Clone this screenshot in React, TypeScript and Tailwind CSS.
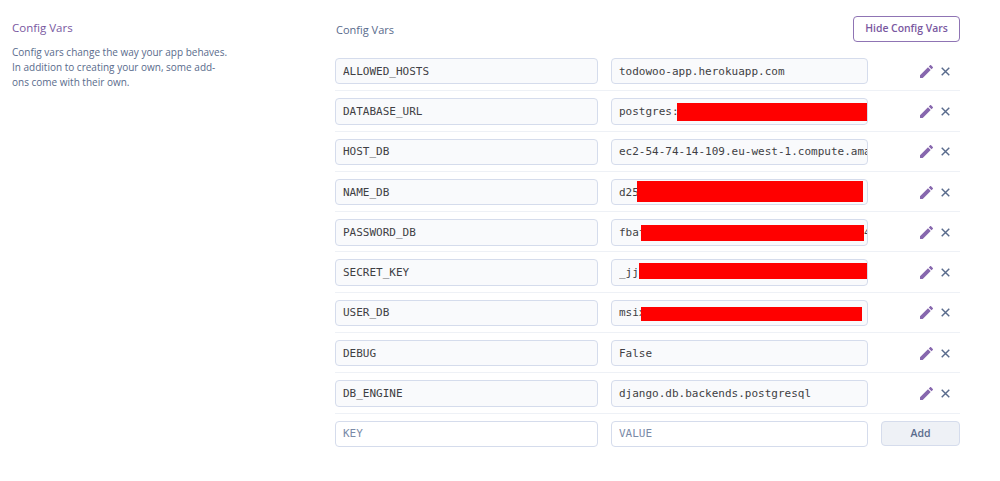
const vars = [
  { k: "ALLOWED_HOSTS", v: "todowoo-app.herokuapp.com" },
  { k: "DATABASE_URL", v: "postgres://kjdhsfkjhsdkjfhsdkjfhskjdfhskjdfhskjdfhskjdfh", red: "left-[66px] top-[4.5px] w-[190px] h-[18px]" },
  { k: "HOST_DB", v: "ec2-54-74-14-109.eu-west-1.compute.amazonaws.com" },
  { k: "NAME_DB", v: "d25kjhsdfkjhsdkfjhsdkfjh", red: "left-[26px] top-[2px] w-[226px] h-[21px]" },
  { k: "PASSWORD_DB", v: "fbafkjhsdfkjhsdkfjhsdkfjhsdkfjhsdkfjh4cdef", red: "left-[30px] top-[6px] w-[223px] h-[16px]" },
  { k: "SECRET_KEY", v: "_jjkjhsdfkjhsdkfjhsdkfjhsdkfjhsdkfjhsdfkj", red: "left-[28px] top-[4px] w-[228px] h-[16px]" },
  { k: "USER_DB", v: "msixkjhsdfkjhsdkfjhsd", red: "left-[30px] top-[7px] w-[221px] h-[14px]" },
  { k: "DEBUG", v: "False" },
  { k: "DB_ENGINE", v: "django.db.backends.postgresql" },
];

function Pencil() {
  return (
    <svg viewBox="3 3 18 18" className="h-[13px] w-[13px] fill-[#8767ae]">
      <path d="M3 17.25V21h3.75L17.81 9.94l-3.75-3.75L3 17.25zM20.71 7.04c.39-.39.39-1.02 0-1.41l-2.34-2.34c-.39-.39-1.02-.39-1.41 0l-1.83 1.83 3.75 3.75 1.83-1.83z" />
    </svg>
  );
}

function Cross() {
  return (
    <svg viewBox="0 0 10 10" className="h-[9px] w-[9px] fill-none stroke-[#596b8c] stroke-[1.6]">
      <path d="M0.8 0.8 9.2 9.2M9.2 0.8 0.8 9.2" />
    </svg>
  );
}

const field =
  "block h-[26.4px] rounded-[4px] border border-[#d5dcec] pl-[7px] font-['DejaVu_Sans_Mono',monospace] text-[11px] text-[#3f3f44] outline-none";

export default function App() {
  return (
    <div className="flex h-[481px] w-[1000px] bg-white pt-4 font-['Open_Sans',sans-serif]">
      <div className="w-[335px] pl-3 pt-[3px]">
        <h2 className="text-[11.5px] leading-[18px] text-[#79589f]">Config Vars</h2>
        <p className="mt-[8px] w-[219px] text-[10px] leading-[15px] text-[#596b8c]">
          Config vars change the way your app behaves. In addition to creating your own, some add-ons come with their own.
        </p>
      </div>
      <div className="w-[625px]">
        <div className="flex h-[42px] items-start justify-between">
          <span className="mt-[6px] pl-px text-[11px] leading-[15px] text-[#596b8c]">Config Vars</span>
          <button className="h-[25.5px] w-[107px] rounded-[4px] border border-[#8f74b4] text-[10.4px] font-semibold text-[#79589f]">
            Hide Config Vars
          </button>
        </div>
        {vars.map((row) => (
          <div key={row.k} className="mb-[7px] flex h-[33.3px] gap-[13px] border-b border-[#eef1f6]">
            <input readOnly value={row.k} className={`${field} w-[263px] shrink-0 bg-[#f9fafc]`} />
            <div className="relative w-[257px] shrink-0">
              <input readOnly value={row.v} className={`${field} w-full bg-[#f9fafc]`} />
              {row.red && <div className={`absolute bg-[#ff0000] ${row.red}`} />}
            </div>
            <div className="flex h-[26.4px] flex-1 items-center gap-[8px] pl-[39px]">
              <Pencil />
              <Cross />
            </div>
          </div>
        ))}
        <div className="flex gap-[13px]">
          <input readOnly placeholder="KEY" className={`${field} w-[263px] shrink-0 bg-white placeholder:text-[#7a8aa8]`} />
          <input readOnly placeholder="VALUE" className={`${field} w-[257px] shrink-0 bg-white placeholder:text-[#7a8aa8]`} />
          <button className="ml-auto h-[25.5px] w-[79px] rounded-[4px] border border-[#d5dcec] bg-[#eef1f6] text-[10.5px] font-semibold text-[#596b8c]">
            Add
          </button>
        </div>
      </div>
    </div>
  );
}
